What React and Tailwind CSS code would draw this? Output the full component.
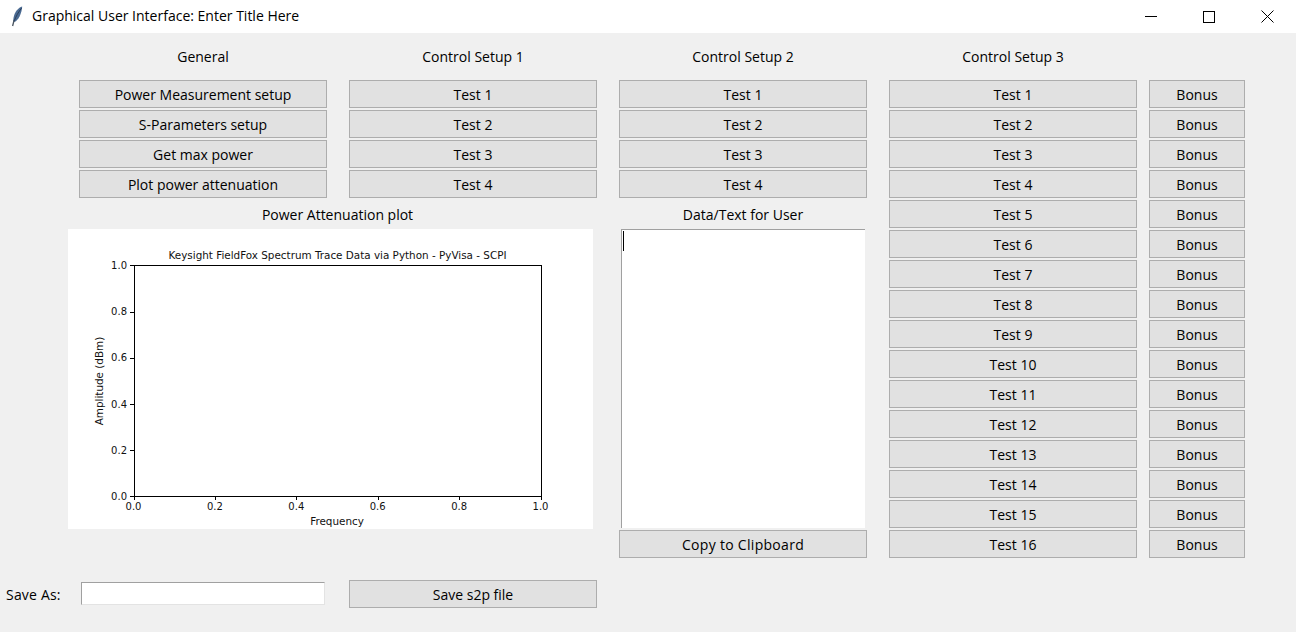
import React from "react";

const general = [
  "Power Measurement setup",
  "S-Parameters setup",
  "Get max power",
  "Plot power attenuation",
];
const fourTests = ["Test 1", "Test 2", "Test 3", "Test 4"];
const allTests = Array.from({ length: 16 }, (_, i) => `Test ${i + 1}`);

const Btn = ({ children, className = "" }) => (
  <button
    className={`h-[28px] w-full pt-[2px] bg-[#e1e1e1] border border-[#adadad] text-[#000] ${className}`}
  >
    {children}
  </button>
);

const Heading = ({ children }) => (
  <div className="h-[45px] pt-[2px] flex items-center justify-center text-[#000]">
    {children}
  </div>
);

const Feather = () => (
  <svg width="20" height="22" viewBox="0 0 20 22" className="ml-[7px]">
    <path d="M15.2 0.5 C11.5 1.5 7.6 6 6.6 11.5 L6 15.5 L7.4 16 C11.5 14.5 14.8 7 15.2 0.5 Z" fill="#4a6a92" />
    <path d="M14.6 2 C11.5 6 8.8 10.5 7.2 15" fill="none" stroke="#22344e" strokeWidth="0.8" />
    <path d="M7 14.5 L5.6 20" fill="none" stroke="#4a5560" strokeWidth="1.3" />
  </svg>
);

const xTicks = [
  [134, "0.0"],
  [215.4, "0.2"],
  [296.8, "0.4"],
  [378.2, "0.6"],
  [459.6, "0.8"],
  [541, "1.0"],
];
const yTicks = [
  [496, "0.0"],
  [449.8, "0.2"],
  [403.6, "0.4"],
  [357.4, "0.6"],
  [311.2, "0.8"],
  [265, "1.0"],
];

// matplotlib canvas, coordinates are page px shifted by the plot's origin
const Plot = () => (
  <svg
    width="525"
    height="300"
    viewBox="68 229 525 300"
    className="block bg-white"
    style={{ fontFamily: '"DejaVu Sans", sans-serif' }}
  >
    <rect x="134.5" y="265.5" width="407" height="231" fill="none" stroke="#000" strokeWidth="1" />
    {xTicks.map(([x, label]) => (
      <g key={label}>
        <line x1={Math.floor(x) + 0.5} x2={Math.floor(x) + 0.5} y1="496" y2="500" stroke="#000" />
        <text x={x - 0.5} y="510" fontSize="10" textAnchor="middle" fill="#111">
          {label}
        </text>
      </g>
    ))}
    {yTicks.map(([y, label]) => (
      <g key={label}>
        <line x1="130" x2="134" y1={Math.ceil(y) + 0.5} y2={Math.ceil(y) + 0.5} stroke="#000" />
        <text x="127" y={y + 4} fontSize="10" textAnchor="end" fill="#111">
          {label}
        </text>
      </g>
    ))}
    <text x="337.5" y="259" fontSize="10.4" textAnchor="middle" fill="#111">
      Keysight FieldFox Spectrum Trace Data via Python - PyVisa - SCPI
    </text>
    <text x="337" y="525" fontSize="10.4" textAnchor="middle" fill="#111">
      Frequency
    </text>
    <text
      x="0"
      y="0"
      fontSize="10.4"
      textAnchor="middle"
      fill="#111"
      transform="translate(103 381) rotate(-90)"
    >
      Amplitude (dBm)
    </text>
  </svg>
);

const App = () => {
  return (
    <div
      className="w-[1296px] h-[632px] overflow-hidden bg-[#f0f0f0] text-[14px] leading-none"
      style={{ fontFamily: '"Open Sans", "Noto Sans", sans-serif' }}
    >
      <div className="h-[33px] bg-white flex items-center">
        <Feather />
        <span className="ml-[5px] pb-[2px] text-[#000]">Graphical User Interface: Enter Title Here</span>
        <div className="ml-auto flex">
          <div className="w-[58px] h-[28px] flex items-center justify-center">
            <div className="w-[12px] h-px bg-black"></div>
          </div>
          <div className="w-[58px] h-[28px] flex items-center justify-center">
            <div className="w-[12px] h-[12px] border border-black"></div>
          </div>
          <div className="w-[58px] h-[28px] flex items-center justify-center">
            <svg width="13" height="13" viewBox="0 0 13 13">
              <path d="M0.5 0.5 L12.5 12.5 M12.5 0.5 L0.5 12.5" stroke="#000" strokeWidth="1" fill="none" />
            </svg>
          </div>
        </div>
      </div>

      <div className="flex pl-[79px]">
        <div className="w-[518px]">
          <div className="grid grid-cols-2 gap-x-[22px]">
            <div className="flex flex-col gap-[2px]">
              <Heading>General</Heading>
              {general.map((t) => (
                <Btn key={t}>{t}</Btn>
              ))}
            </div>
            <div className="flex flex-col gap-[2px]">
              <Heading>Control Setup 1</Heading>
              {fourTests.map((t) => (
                <Btn key={t}>{t}</Btn>
              ))}
            </div>
          </div>
          <div className="mt-[2px] -ml-[11px] w-[525px]">
            <div className="h-[27px] pt-[2px] flex items-center justify-center pl-[14px]">
              Power Attenuation plot
            </div>
            <div className="mt-[2px]">
              <Plot />
            </div>
          </div>
        </div>

        <div className="ml-[22px] w-[248px] flex flex-col gap-[2px]">
          <Heading>Control Setup 2</Heading>
          {fourTests.map((t) => (
            <Btn key={t}>{t}</Btn>
          ))}
          <div className="h-[27px] pt-[2px] flex items-center justify-center">Data/Text for User</div>
          <div className="mx-[2px] h-[299px] bg-white border-t border-l border-[#a0a0a0]">
            <div className="w-px h-[20px] bg-black mt-px ml-px"></div>
          </div>
          <Btn className="tracking-[0.3px]">Copy to Clipboard</Btn>
        </div>

        <div className="ml-[22px] w-[248px] flex flex-col gap-[2px]">
          <Heading>Control Setup 3</Heading>
          {allTests.map((t) => (
            <Btn key={t}>{t}</Btn>
          ))}
        </div>

        <div className="ml-[12px] w-[96px] flex flex-col gap-[2px]">
          <div className="h-[45px]"></div>
          {allTests.map((t) => (
            <Btn key={t}>Bonus</Btn>
          ))}
        </div>
      </div>

      <div className="flex items-start mt-[22px]">
        <div className="w-[81px] h-[28px] pl-[6px] pt-[2px] flex items-center tracking-[0.2px]">Save As:</div>
        <input
          className="mt-[2px] w-[244px] h-[23px] bg-white border-t border-l border-t-[#a0a0a0] border-l-[#a0a0a0] border-r border-b border-r-[#e3e3e3] border-b-[#e3e3e3]"
          readOnly
        />
        <Btn className="ml-[24px] !w-[248px]">Save s2p file</Btn>
      </div>
    </div>
  );
};

export default App;
